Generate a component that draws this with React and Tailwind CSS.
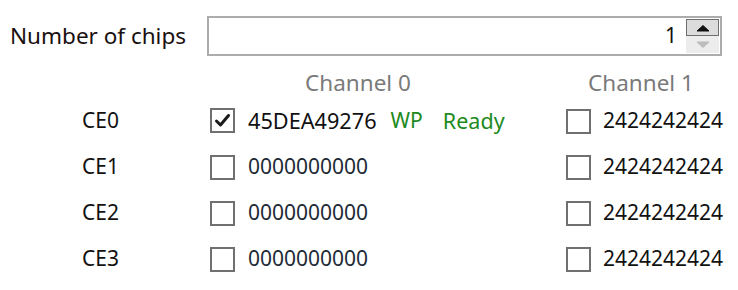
import React from "react";

function Box({ checked }) {
  return (
    <div className="w-[25px] h-[25px] border-2 border-[#707070] bg-white flex items-center justify-center shrink-0">
      {checked && (
        <svg width="17" height="17" viewBox="0 0 17 17">
          <path d="M2.5 9 L6.5 13 L14.5 3.5" fill="none" stroke="#1a1a1a" strokeWidth="3" strokeLinecap="round" strokeLinejoin="round" />
        </svg>
      )}
    </div>
  );
}

const rows = [
  { ce: "CE0", c0: "45DEA49276", checked: true, extra: true },
  { ce: "CE1", c0: "0000000000" },
  { ce: "CE2", c0: "0000000000" },
  { ce: "CE3", c0: "0000000000" },
];

export default function App() {
  return (
    <div
      className="w-[738px] h-[290px] bg-white text-[#111] overflow-hidden"
      style={{ fontFamily: '"Noto Sans", "Open Sans", sans-serif' }}
    >
      <div className="flex items-center pt-[16px] pl-[10px]">
        <div className="w-[197px] text-[22.5px] leading-[26px] text-[#1a1010]">Number of chips</div>
        <div className="w-[515px] h-[40px] border-2 border-[#acacac] flex items-stretch">
          <div className="flex-1 flex items-center justify-end pr-[9px] text-[21px]">1</div>
          <div className="w-[34px] flex flex-col py-[1px] pr-[1px]">
            <div className="h-[17px] border border-[#6f6f6f] bg-[#dcdcdc] flex items-center justify-center">
              <svg width="14" height="8" viewBox="0 0 14 8">
                <path d="M1 7 L7 1.5 L13 7 Z" fill="#111" stroke="#111" strokeWidth="1" strokeLinejoin="round" />
              </svg>
            </div>
            <div className="h-[17px] bg-[#ececec] flex items-center justify-center">
              <svg width="14" height="8" viewBox="0 0 14 8">
                <path d="M1 1 L7 6.5 L13 1 Z" fill="#bdbdbd" stroke="#bdbdbd" strokeWidth="1" strokeLinejoin="round" />
              </svg>
            </div>
          </div>
        </div>
      </div>

      <div className="flex pt-[15px] pb-[4px] text-[22.5px] leading-[23px] text-[#7a7a7a]">
        <div className="w-[209px]" />
        <div className="w-[298px] text-center">Channel 0</div>
        <div className="w-[58px]" />
        <div className="w-[152px] text-center">Channel 1</div>
      </div>

      <div className="flex flex-col">
        {rows.map((r) => (
          <div key={r.ce} className="flex items-center h-[46px] text-[21px]">
            <div className="w-[210px] pl-[82px]">{r.ce}</div>
            <div className="w-[356px] flex items-center">
              <Box checked={r.checked} />
              <span className={`ml-[13px] ${r.checked ? "text-[21.7px] text-[#111]" : "text-[#1e2b36]"}`}>{r.c0}</span>
              {r.extra && (
                <>
                  <span className="ml-[14px] text-[#208a20]">WP</span>
                  <span className="ml-[20px] text-[21.5px] text-[#208a20]">Ready</span>
                </>
              )}
            </div>
            <div className="flex items-center">
              <Box />
              <span className="ml-[12px]">2424242424</span>
            </div>
          </div>
        ))}
      </div>
    </div>
  );
}
